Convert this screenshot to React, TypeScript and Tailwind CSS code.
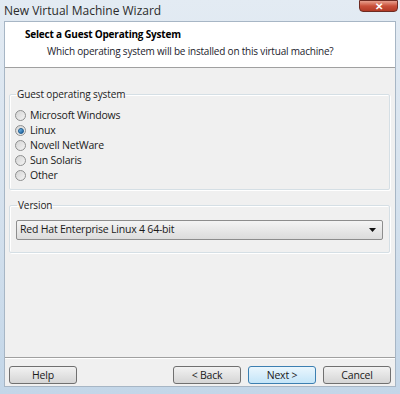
import React from 'react';

const options = ['Microsoft Windows', 'Linux', 'Novell NetWare', 'Sun Solaris', 'Other'];

function Radio({ checked }: { checked: boolean }) {
    return (
        <span className="w-[11px] h-[11px] rounded-full border border-[#8e8f8f] bg-gradient-to-br from-[#d4d4d4] to-[#f4f4f4] flex items-center justify-center shrink-0">
            {checked && <span className="w-[6px] h-[6px] rounded-full bg-gradient-to-br from-[#7fc6f2] to-[#155a98] border border-[#1d5a8d]" />}
        </span>
    );
}

function Button({ label, primary }: { label: string; primary?: boolean }) {
    return (
        <button
            className={
                primary
                    ? 'w-[68px] h-[18px] rounded-[3px] border border-[#3c7fb1] bg-gradient-to-b from-[#eaf6fd] to-[#c4e5f8] text-[10.5px] text-[#1a1a1a] leading-none tracking-[-0.2px]'
                    : 'w-[68px] h-[18px] rounded-[3px] border border-[#707070] bg-gradient-to-b from-[#f2f2f2] to-[#d5d5d5] text-[10.5px] text-[#1a1a1a] leading-none tracking-[-0.2px]'
            }
        >
            {label}
        </button>
    );
}

export default function App() {
    return (
        <div
            className="w-[400px] h-[394px] flex flex-col bg-gradient-to-b from-[#e3ebf3] via-[#d6e2ee] to-[#c3d6e8] relative overflow-hidden"
            style={{ fontFamily: '"Open Sans", "Noto Sans", sans-serif' }}
        >
            {/* Title bar */}
            <div className="h-[21px] flex items-center pl-[4px] shrink-0">
                <span className="text-[12px] text-[#2b2b2b]">New Virtual Machine Wizard</span>
            </div>
            <div className="absolute top-0 right-[2px] w-[39px] h-[12px] rounded-b-[4px] border border-[#6d2b22] bg-gradient-to-b from-[#e8a08e] via-[#c9503a] to-[#b23a26] flex items-center justify-center">
                <span className="text-white text-[10px] font-bold leading-none">✕</span>
            </div>

            {/* Content */}
            <div className="flex-1 flex flex-col mx-[4px] bg-[#f0f0f0] border border-[#a7b6c5]">
                {/* Header */}
                <div className="h-[46px] bg-white border-b border-[#a0a0a0] pt-[4px] shrink-0">
                    <div className="pl-[20px] text-[10px] font-bold text-black leading-[16px] tracking-[-0.2px]">Select a Guest Operating System</div>
                    <div className="pl-[42px] text-[10px] text-[#1c1c2c] leading-[16px] mt-[1px] tracking-[-0.2px]">
                        Which operating system will be installed on this virtual machine?
                    </div>
                </div>

                {/* Body */}
                <div className="flex flex-col pl-[4px] pr-[5px] pt-[19px] gap-[8px]">
                    <fieldset className="border border-[#d5dfe5] rounded-[2px] px-[5px] pb-[6px] pt-[6px] shadow-[inset_1px_1px_0_#fff,1px_1px_0_#fff]">
                        <legend className="text-[10px] text-[#222] px-[1px] ml-[1px] tracking-[-0.1px]">Guest operating system</legend>
                        <div className="flex flex-col">
                            {options.map((o) => (
                                <label key={o} className="h-[15px] flex items-center gap-[4px] text-[10.5px] text-[#1a1a1a] tracking-[-0.2px]">
                                    <Radio checked={o === 'Linux'} />
                                    <span>{o}</span>
                                </label>
                            ))}
                        </div>
                    </fieldset>

                    <fieldset className="border border-[#d5dfe5] rounded-[2px] px-[6px] pb-[12px] pt-[7px] shadow-[inset_1px_1px_0_#fff,1px_1px_0_#fff]">
                        <legend className="text-[10px] text-[#222] px-[1px] ml-[1px] tracking-[-0.1px]">Version</legend>
                        <div className="h-[20px] border border-[#8d8d8d] rounded-[2px] bg-gradient-to-b from-[#f4f4f4] to-[#dcdcdc] flex items-center justify-between pl-[3px] pr-[6px]">
                            <span className="text-[10.5px] text-[#1a1a1a] tracking-[-0.2px]">Red Hat Enterprise Linux 4 64-bit</span>
                            <svg width="7" height="4" viewBox="0 0 7 4">
                                <path d="M0 0h7L3.5 4z" fill="#111" />
                            </svg>
                        </div>
                    </fieldset>
                </div>

                <div className="flex-1" />

                {/* Footer */}
                <div className="border-t border-[#a0a0a0] shadow-[inset_0_1px_0_#fff] h-[29px] flex items-start pt-[8px] px-[4px] shrink-0">
                    <Button label="Help" />
                    <div className="flex-1" />
                    <div className="flex gap-[7px]">
                        <Button label="< Back" />
                        <Button label="Next >" primary />
                        <Button label="Cancel" />
                    </div>
                </div>
            </div>
            <div className="h-[7px] shrink-0" />
        </div>
    );
}
